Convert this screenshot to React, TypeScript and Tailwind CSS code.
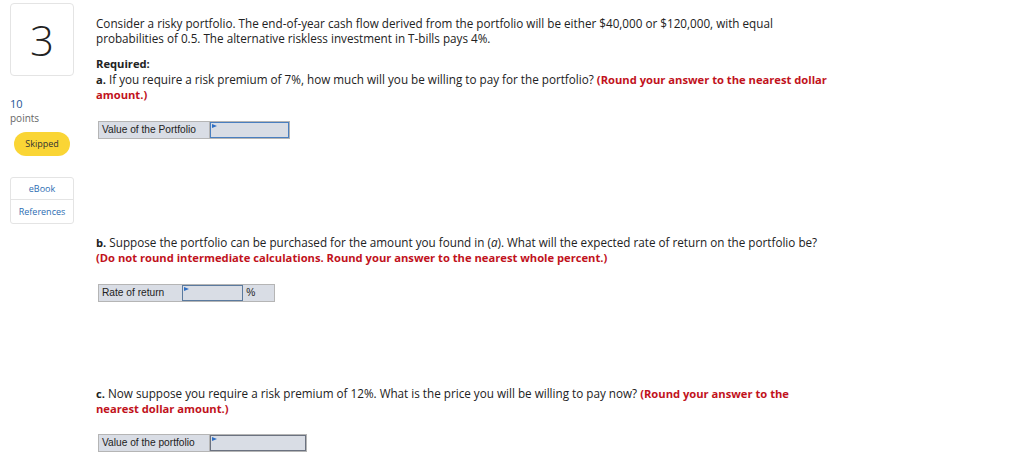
import React from 'react';

const FONT = "font-['Open_Sans','Lato',sans-serif]";
const ARIAL = "font-['Liberation_Sans',Arial,sans-serif]";
const RED = 'text-[#c1121c] font-bold text-[11.2px]';

function Flag() {
  return (
    <svg className="absolute left-[1px] top-[1px]" width="5" height="5" viewBox="0 0 5 5">
      <path d="M0 0 L5 2 L0 4 Z" fill="#2f6fc4" />
    </svg>
  );
}

function AnswerInput({ width, borderCls }: { width: string; borderCls: string }) {
  return (
    <div className={`relative ${width} h-full bg-[#d9dde5] border ${borderCls}`}>
      <Flag />
    </div>
  );
}

export default function App() {
  return (
    <div className={`w-[1024px] h-[462px] bg-white flex ${FONT} text-[#222]`}>
      {/* ── Sidebar ── */}
      <div className="w-[96px] shrink-0 pl-[10px] pt-[3px] flex flex-col">
        <div className="w-[64px] h-[73px] border border-[#e4e4e4] rounded-[4px] flex items-center justify-center">
          <span className="text-[42px] font-light leading-none text-[#222]">3</span>
        </div>
        <p className="mt-[21px] text-[11px] leading-[13px] text-[#1f5696]">10</p>
        <p className="text-[10px] leading-[13px] text-[#666] mt-[2px]">points</p>
        <div className="mt-[7px] ml-[4px] w-[56px] h-[24px] rounded-full bg-[#fad535] flex items-center justify-center text-[9px] text-[#333]">
          Skipped
        </div>
        <div className="mt-[21px] w-[64px] border border-[#e4e4e4] rounded-[3px] text-[9px] text-[#2c6db3] flex flex-col">
          <div className="h-[22px] flex items-center justify-center border-b border-[#e4e4e4]">eBook</div>
          <div className="h-[23px] flex items-center justify-center">References</div>
        </div>
      </div>

      {/* ── Question ── */}
      <div className="flex-1 pt-[16px] text-[11.7px] leading-[14.5px]">
        <p>
          Consider a risky portfolio. The end-of-year cash flow derived from the portfolio will be either $40,000 or $120,000, with equal
          <br />
          probabilities of 0.5. The alternative riskless investment in T-bills pays 4%.
        </p>

        <p className="mt-[12px] font-bold text-[11.2px]">Required:</p>
        <p>
          <b className="text-[11.2px]">a.</b> If you require a risk premium of 7%, how much will you be willing to pay for the portfolio?{' '}
          <span className={RED}>(Round your answer to the nearest dollar
            <br />amount.)</span>
        </p>

        <div className={`mt-[18px] ml-[2px] flex h-[18px] w-[192px] border border-[#b5b5b5] bg-[#d9dde5] ${ARIAL} text-[10.2px] leading-[16px] text-[#222]`}>
          <div className="w-[112px] pl-[3px] border-r border-[#b5b5b5]">Value of the Portfolio</div>
          <AnswerInput width="w-[79px]" borderCls="border-[#4a7fc0]" />
        </div>

        <p className="mt-[96px]">
          <b className="text-[11.2px]">b.</b> Suppose the portfolio can be purchased for the amount you found in (<i>a</i>). What will the expected rate of return on the portfolio be?
          <br />
          <span className={RED}>(Do not round intermediate calculations. Round your answer to the nearest whole percent.)</span>
        </p>

        <div className={`mt-[18px] ml-[2px] flex h-[18px] w-[177px] border border-[#b5b5b5] bg-[#d9dde5] ${ARIAL} text-[10.2px] leading-[16px] text-[#222]`}>
          <div className="w-[83px] pl-[3px]">Rate of return</div>
          <AnswerInput width="w-[62px]" borderCls="border-[#5b7a9e]" />
          <div className="w-[31px] pl-[3px]">%</div>
        </div>

        <p className="mt-[84px]">
          <b className="text-[11.2px]">c.</b> Now suppose you require a risk premium of 12%. What is the price you will be willing to pay now?{' '}
          <span className={RED}>(Round your answer to the
            <br />nearest dollar amount.)</span>
        </p>

        <div className={`mt-[17px] ml-[2px] flex h-[18px] w-[209px] border border-[#b5b5b5] bg-[#d9dde5] ${ARIAL} text-[10.2px] leading-[16px] text-[#222]`}>
          <div className="w-[112px] pl-[3px] border-r border-[#b5b5b5]">Value of the portfolio</div>
          <AnswerInput width="w-[96px]" borderCls="border-[#6b7280]" />
        </div>
      </div>
    </div>
  );
}
